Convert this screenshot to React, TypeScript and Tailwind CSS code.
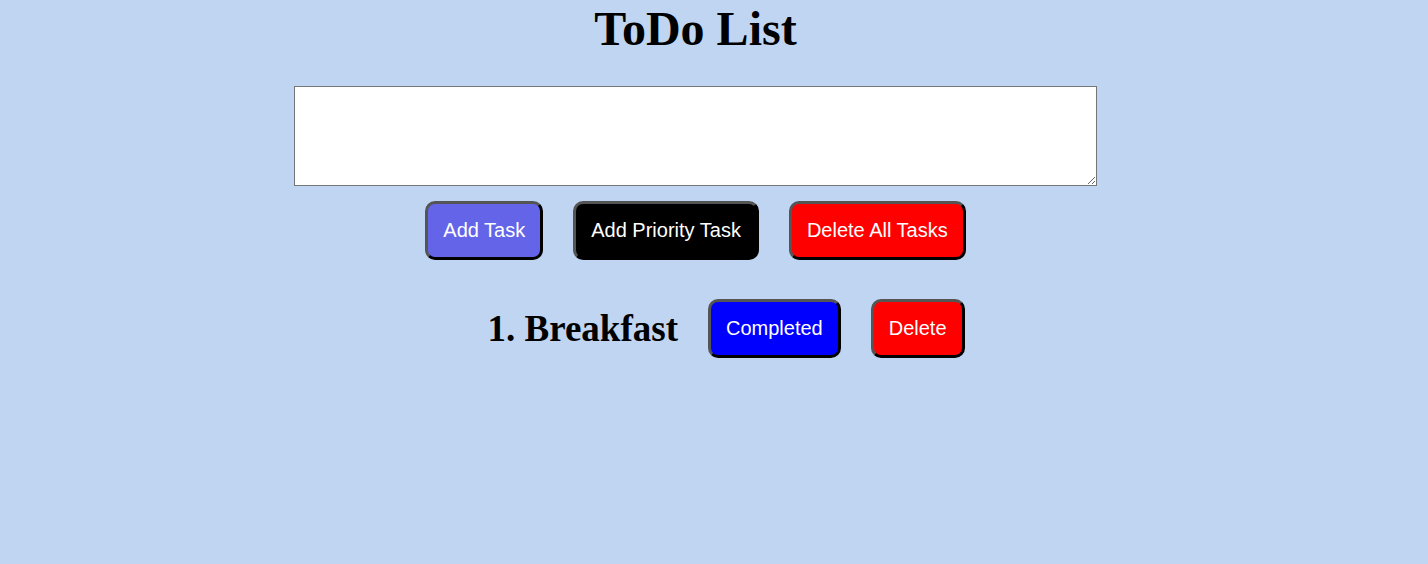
export default function App() {
  const btn =
    "rounded-[10px] border-[3px] border-t-[#555] border-l-[#555] border-b-black border-r-black px-[15px] py-[15px] text-[20px] leading-[23px] text-white";

  return (
    <div
      className="min-h-[564px] w-full bg-[#bfd5f2]"
      style={{ fontFamily: '"Liberation Sans", Arial, sans-serif' }}
    >
      <div className="flex w-[1391px] flex-col items-center">
        <h1
          className="mt-[2px] text-[48px] font-bold leading-[53px] text-black"
          style={{ fontFamily: '"Liberation Serif", "Times New Roman", serif' }}
        >
          ToDo List
        </h1>

        <textarea className="mt-[31px] h-[100px] w-[803px] border border-[#767676] bg-white" />

        <div className="mt-[15px] flex gap-[30px]">
          <button className={`${btn} bg-[#6464e8]`}>Add Task</button>
          <button className={`${btn} bg-black`}>Add Priority Task</button>
          <button className={`${btn} bg-[#ff0000]`}>Delete All Tasks</button>
        </div>

        <div className="mt-[39px] flex items-center gap-[30px] pl-[61px]">
          <h2
            className="text-[37px] font-bold text-black"
            style={{ fontFamily: '"Liberation Serif", "Times New Roman", serif' }}
          >
            1. Breakfast
          </h2>
          <button className={`${btn} bg-[#0000ff]`}>Completed</button>
          <button className={`${btn} bg-[#ff0000]`}>Delete</button>
        </div>
      </div>
    </div>
  );
}
